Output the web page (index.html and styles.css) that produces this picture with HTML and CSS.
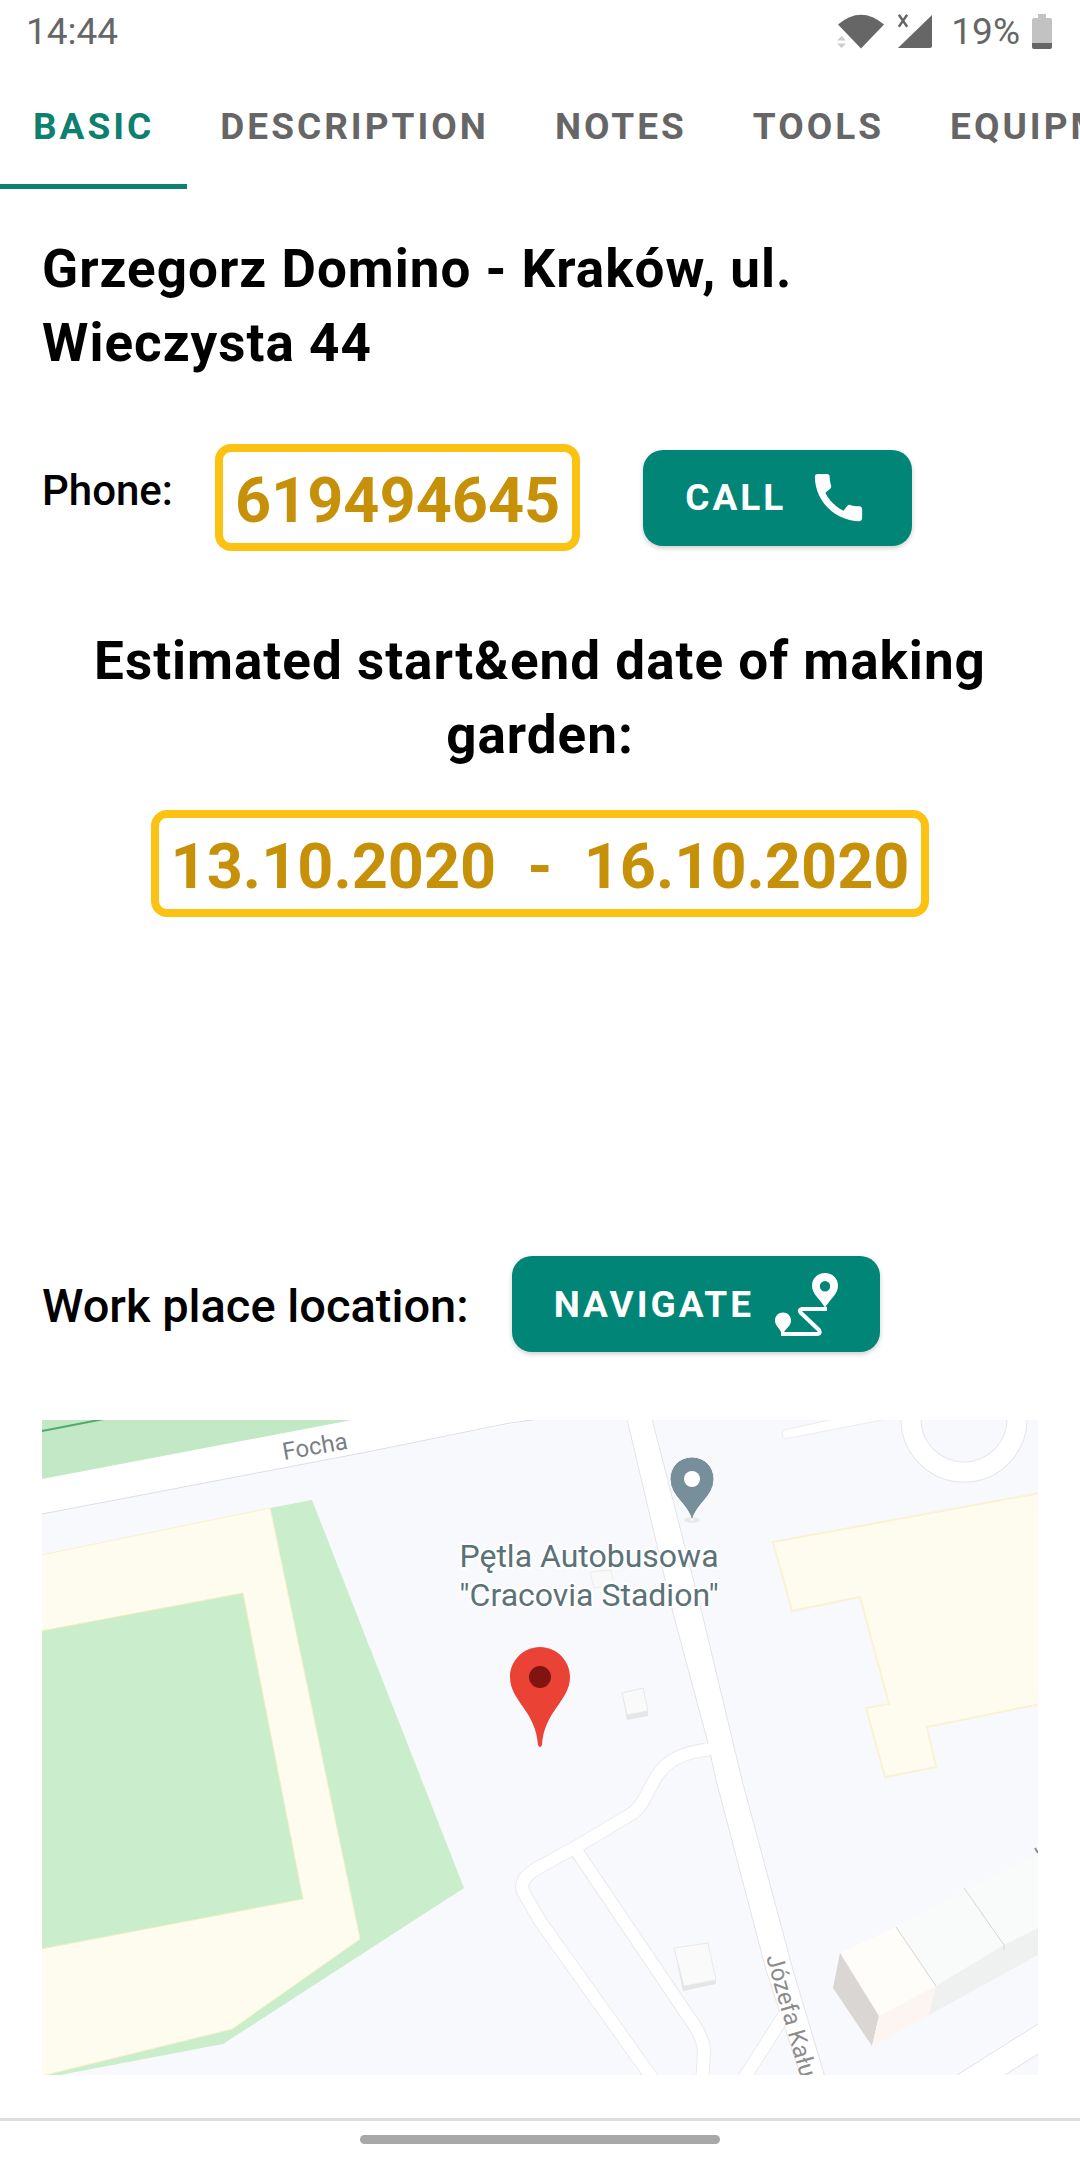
FILE: index.html
```html
<!DOCTYPE html>
<html lang="en">
<head>
<meta charset="utf-8">
<meta name="viewport" content="width=device-width, initial-scale=1">
<title>Grzegorz Domino - Kraków</title>
<link rel="stylesheet" href="styles.css">
</head>
<body>
<header class="status">
  <time class="clock">14:44</time>
  <div class="indicators">
    <svg class="wifi" viewBox="0 0 48 36" aria-hidden="true">
      <path fill="#666" d="M24 34.500 1 10.500Q24-9 47 10.500z"/>
      <path fill="#ccc" d="M0 26.500 4.500 22 9 26.500zM0 29.500h9L4.500 34z"/>
    </svg>
    <svg class="signal" viewBox="0 0 36 36" aria-hidden="true">
      <path fill="#666" d="M35 1v31q0 2-2 2H1z"/>
      <path fill="none" stroke="#666" stroke-width="2.400" d="m1.800.800 8.400 12M10.200.800l-8.400 12"/>
    </svg>
    <span class="percent">19%</span>
    <svg class="battery" viewBox="0 0 20 36" aria-hidden="true">
      <path fill="#c2c2c2" d="M6 0h8v4h4q2 0 2 2v24H0V6q0-2 2-2h4z"/>
      <path fill="#666" d="M0 29h20v4q0 2-2 2H2q-2 0-2-2z"/>
    </svg>
  </div>
</header>

<div class="tabs" role="tablist">
  <button class="tab tab-active" role="tab" aria-selected="true">BASIC</button>
  <button class="tab" role="tab" aria-selected="false">DESCRIPTION</button>
  <button class="tab" role="tab" aria-selected="false">NOTES</button>
  <button class="tab" role="tab" aria-selected="false">TOOLS</button>
  <button class="tab" role="tab" aria-selected="false">EQUIPMENT</button>
</div>

<main class="content">
  <h1 class="title">Grzegorz Domino - Kraków, ul. Wieczysta 44</h1>

  <div class="phone-row">
    <span class="phone-label">Phone:</span>
    <span class="value-box">619494645</span>
    <button class="action">
      <span>CALL</span>
      <svg class="action-icon" viewBox="0 0 24 24" aria-hidden="true">
        <path fill="#fff" d="M20.010 15.380c-1.230 0-2.420-.2-3.530-.56a.98.98 0 0 0-1.010.24l-1.570 1.970c-2.830-1.350-5.480-3.900-6.890-6.830l1.950-1.660c.27-.28.350-.67.240-1.020-.37-1.110-.56-2.300-.56-3.530 0-.54-.45-.99-.99-.99H4.190C3.650 3 3 3.240 3 3.990 3 13.280 10.730 21 20.010 21c.71 0 .99-.63.990-1.180v-3.450c0-.54-.45-.99-.99-.99z"/>
      </svg>
    </button>
  </div>

  <section class="dates">
    <h2 class="title title-center">Estimated start&amp;end date of making garden:</h2>
    <span class="value-box">13.10.2020&nbsp; -&nbsp; 16.10.2020</span>
  </section>

  <div class="location-row">
    <span class="location-label">Work place location:</span>
    <button class="action">
      <span>NAVIGATE</span>
      <svg class="action-icon" viewBox="0 0 63 63" aria-hidden="true">
        <path fill="#fff" fill-rule="evenodd" d="M50 0C42.500 0 37 5.500 37 12.500 37 21 44 25 50 34.500 56 25 63 21 63 12.500 63 5.500 57.500 0 50 0zM50 8a5.200 5.200 0 1 1 0 10.400A5.200 5.200 0 0 1 50 8z"/>
        <path fill="#fff" d="M8 39.500c-4.500 0-8 3.500-8 8 0 5 4 7 6 11.500V62h3v-3c3-4.500 7-6.500 7-11.500 0-4.500-3.500-8-8-8z"/>
        <path fill="none" stroke="#fff" stroke-width="4" stroke-linejoin="round" d="M52 36H27q-4 1-1 4L44 57q2 4-2 4H6"/>
      </svg>
    </button>
  </div>

  <svg class="map" viewBox="0 0 996 655" role="img" aria-label="Map of the work place">
    <rect width="996" height="655" fill="#f8f9fc"/>
    <!-- park and the avenue along it -->
    <path fill="#fff" d="M0 0h491L0 94z"/>
    <path fill="none" stroke="#dedee6" d="M0 94 325 32 468 3 491 0"/>
    <path fill="#c3e8c5" d="M0 0h310L0 59z"/>
    <path fill="none" stroke="#4faa6b" stroke-width="2" d="M0 11 62-1"/>
    <!-- sports ground -->
    <path fill="#caeecb" d="m228 88 42-8 152 388-241 156L18 655H0V300z"/>
    <path fill="#fefcee" stroke="#fbf0cd" d="M-1 135 228 88 318 519 190 609-1 656z"/>
    <path fill="#caeecb" stroke="#f3eebf" d="m-1 211 202-38 60 306-262 50z"/>
    <!-- side streets -->
    <g fill="none" stroke-linejoin="round">
      <g stroke="#ebebee" stroke-width="14">
        <path d="M670 329C640 332 625 340 614 357L600 383Q595 391 586 396L539 424 494 449Q474 461 483 475L498 501 608 655l6 10"/>
        <path d="m534 430 114 169Q662 618 662 632L660 665"/>
        <path d="m741 597-28 44-15 24"/>
      </g>
      <g stroke="#fff" stroke-width="12">
        <path d="M672 329C640 332 625 340 614 357L600 383Q595 391 586 396L539 424 494 449Q474 461 483 475L498 501 608 655l6 10"/>
        <path d="m534 430 114 169Q662 618 662 632L660 665"/>
        <path d="m743 594-30 47-15 24"/>
      </g>
    </g>
    <!-- main street -->
    <path fill="#fff" stroke="#e4e4e8" d="m585-1 46 194 35 130 8 37 50 190 35 107h24L751 550 700 360 660 193 610-1z"/>
    <path fill="none" stroke="#fff" stroke-width="11" d="M672 329h-10"/>
    <path fill="none" stroke="#fff" stroke-width="11" d="m744 592-8 13"/>
    <!-- parking entry and roundabout -->
    <path fill="#fff" stroke="#ececf0" d="M792-1 742 10q-4 4 1 9L845-1z"/>
    <circle cx="922" cy="-1" r="53" fill="none" stroke="#e6e6ea" stroke-width="21"/>
    <circle cx="922" cy="-1" r="53" fill="none" stroke="#fff" stroke-width="19"/>
    <path fill="#fefcee" stroke="#faf2d4" stroke-width="2" d="M731 122 998 73v211l-113 23 9 40-51 10-19-69 23-4-29-107-68 14z"/>
    <!-- small buildings -->
    <path fill="#e5e6e8" d="m580 273 5 27 21-4v-6l-21 3z"/>
    <path fill="#f9faf9" stroke="#e7e8e9" d="m580 273 21-5 5 23-21 4z"/>
    <path fill="#f9f9fa" stroke="#ededee" d="m548 152 4 16 20-4-3-14z"/>
    <path fill="#e4e6e6" d="m632 528 9 43 33-7v-6l-32 8z"/>
    <path fill="#f9faf9" stroke="#e9eaea" d="m632 528 34-5 8 37-32 6z"/>
    <!-- terraced block -->
    <path fill="#fefdf9" d="m798 533 56-26 40 59-57 30z"/>
    <path fill="#dad6d3" d="m798 533 39 63-7 30-39-58z"/>
    <path fill="#fcf5f1" d="m837 596 57-30-7 29-57 31z"/>
    <path fill="#f9fafa" d="m854 507 142-74v75l-34 17-68 41z"/>
    <path fill="#eff1f1" d="m894 566 68-41 34-17v27l-109 60z"/>
    <path fill="none" stroke="#d6d6d6" d="m854 507 40 59M922 468l40 57v5"/>
    <path fill="none" stroke="#8d9090" stroke-width="2" d="m993 428 3 5"/>
    <!-- lower right street -->
    <path fill="#fff" d="m915 655 81-51v30l-33 21z"/>
    <path fill="none" stroke="#e2e2e6" d="m915 655 81-51M963 655l33-21"/>
    <!-- street and place names -->
    <text class="street" transform="translate(242 40) rotate(-10)">Focha</text>
    <text class="street street-grey" transform="translate(724 537) rotate(74)">Józefa Kałuży</text>
    <text class="place" x="547" y="147">Pętla Autobusowa</text>
    <text class="place" x="547" y="186">"Cracovia Stadion"</text>
    <!-- pins -->
    <ellipse cx="650" cy="100" rx="8" ry="3" fill="#e8e9eb"/>
    <path fill="#778f9b" stroke="#fff" d="M650 37c-13 0-22 10-22 22 0 18 18 24 22 42 4-18 22-24 22-42 0-12-9-22-22-22z"/>
    <circle cx="650" cy="59" r="8" fill="#fff"/>
    <path fill="#ea4335" d="M498 227c-17 0-30 14-30 30 0 24 26 34 28 68q2 4 4 0c2-34 28-44 28-68 0-16-13-30-30-30z"/>
    <circle cx="498" cy="257" r="11" fill="#811411"/>
  </svg>
</main>

<footer class="gesture-bar"><span class="handle"></span></footer>
</body>
</html>
```
FILE: styles.css
```css
* {
  box-sizing: border-box;
}

body {
  margin: 0;
  min-height: 100vh;
  display: flex;
  flex-direction: column;
  background: #fff;
  color: #000;
  font-family: Roboto, "Noto Sans", sans-serif;
  font-size: 42px;
  overflow-x: hidden;
}

button {
  border: 0;
  background: none;
  font-family: inherit;
  cursor: pointer;
}

/* status bar */
.status {
  height: 63px;
  padding: 0 28px 0 26px;
  display: flex;
  align-items: center;
  justify-content: space-between;
  color: #666;
  font-size: 37px;
}

.indicators {
  display: flex;
  align-items: center;
}

.wifi {
  width: 48px;
  height: 36px;
  margin-right: 12px;
}

.signal {
  width: 36px;
  height: 36px;
  margin-right: 18px;
}

.percent {
  margin-right: 12px;
}

.battery {
  width: 20px;
  height: 36px;
}

/* tabs */
.tabs {
  display: flex;
  height: 126px;
  overflow: hidden;
}

.tab {
  flex: none;
  padding: 0 33px;
  border-top: 5px solid transparent;
  border-bottom: 5px solid transparent;
  color: #666;
  font-size: 37px;
  font-weight: 700;
  letter-spacing: 3px;
}

.tab-active {
  border-bottom-color: #0e806f;
  color: #0e806f;
}

/* page content */
.content {
  flex: 1;
  padding: 43px 42px 0;
}

.title {
  margin: 0;
  font-size: 53px;
  font-weight: 700;
  line-height: 74px;
  letter-spacing: 1px;
}

.title-center {
  text-align: center;
}

.value-box {
  display: inline-block;
  padding: 11px 12px 5px;
  border: 8px solid #fcc211;
  border-radius: 16px;
  color: #c69008;
  font-size: 63px;
  font-weight: 700;
  line-height: 75px;
}

.phone-row {
  display: flex;
  align-items: center;
  margin-top: 64px;
}

.phone-label {
  margin-right: 42px;
  padding-bottom: 14px;
  font-weight: 500;
}

.phone-row .action {
  margin-left: 63px;
}

.action {
  display: flex;
  align-items: center;
  gap: 21px;
  height: 96px;
  padding: 0 42px;
  border-radius: 20px;
  background: #018577;
  box-shadow: 0 2px 5px rgba(0, 0, 0, 0.2);
  color: #fff;
  font-size: 37px;
  font-weight: 700;
  letter-spacing: 3px;
}

.action-icon {
  width: 63px;
  height: 63px;
}

.dates {
  display: flex;
  flex-direction: column;
  align-items: center;
  gap: 38px;
  margin-top: 73px;
}

.location-row {
  display: flex;
  align-items: center;
  gap: 43px;
  margin-top: 339px;
}

.location-label {
  padding-top: 3px;
  font-size: 47px;
  font-weight: 500;
}

.map {
  display: block;
  width: 100%;
  height: auto;
  margin-top: 68px;
}

.street {
  fill: #7a7f86;
  font-size: 24px;
}

.street-grey {
  fill: #8c8c8c;
}

.place {
  fill: #5b7278;
  stroke: #fff;
  stroke-width: 4px;
  stroke-linejoin: round;
  paint-order: stroke;
  font-size: 32px;
  text-anchor: middle;
}

/* gesture bar */
.gesture-bar {
  height: 42px;
  padding-top: 14px;
  border-top: 3px solid #ddd;
}

.handle {
  display: block;
  width: 33.333%;
  height: 9px;
  margin: 0 auto;
  border-radius: 5px;
  background: #a8a8a8;
}
```
